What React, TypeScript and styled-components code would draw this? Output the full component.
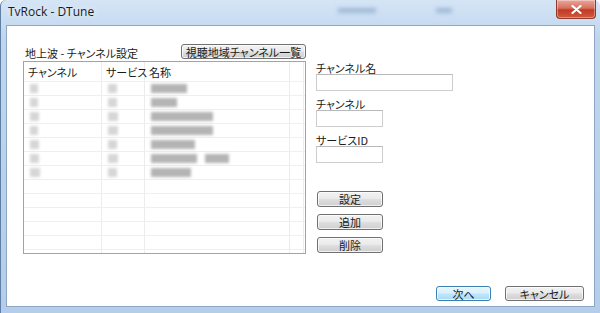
import React from "react";
import styled, { createGlobalStyle } from "styled-components";

const GlobalStyle = createGlobalStyle`
  html, body {
    margin: 0;
    padding: 0;
    background: #ffffff;
  }
  body {
    font-family: "Noto Sans CJK JP", "Noto Sans", sans-serif;
  }
`;

type Row = { ch: number; sv: number; name: number[] };

// blurred rows of the channel table (widths of the smudges)
const rows: Row[] = [
  { ch: 8, sv: 9, name: [36] },
  { ch: 8, sv: 9, name: [26] },
  { ch: 9, sv: 10, name: [62] },
  { ch: 8, sv: 10, name: [62] },
  { ch: 9, sv: 9, name: [44] },
  { ch: 9, sv: 10, name: [46, 24] },
  { ch: 10, sv: 9, name: [40] },
];

const EMPTY_ROWS = 6;

export default function App() {
  return (
    <>
      <GlobalStyle />
      <Window>
        <TitleBar>
          <Title>TvRock - DTune</Title>
          <Ghost $w={38} />
          <Ghost $w={16} />
          <CloseButton aria-label="close">
            <svg width="11" height="9" viewBox="0 0 11 9">
              <path
                d="M1.5 1 L9.5 8 M9.5 1 L1.5 8"
                stroke="#fff"
                strokeWidth="2.2"
                strokeLinecap="round"
              />
            </svg>
          </CloseButton>
        </TitleBar>

        <Client>
          <Main>
            <LeftPanel>
              <PanelHeader>
                <Label>地上波 - チャンネル設定</Label>
                <Button $w={125}>視聴地域チャンネル一覧</Button>
              </PanelHeader>
              <ListBox>
                <HeadRow>
                  <Cell $w={78}>チャンネル</Cell>
                  <Cell $w={43}>サービス</Cell>
                  <Cell $w={145}>名称</Cell>
                  <Cell $w={14} />
                </HeadRow>
                {rows.map((r, i) => (
                  <BodyRow key={i}>
                    <Cell $w={78}>
                      <Smudge style={{ width: r.ch }} />
                    </Cell>
                    <Cell $w={43}>
                      <Smudge style={{ width: r.sv }} />
                    </Cell>
                    <Cell $w={145}>
                      {r.name.map((w, j) => (
                        <Smudge key={j} $dark style={{ width: w }} />
                      ))}
                    </Cell>
                    <Cell $w={14} />
                  </BodyRow>
                ))}
                {Array.from({ length: EMPTY_ROWS }).map((_, i) => (
                  <BodyRow key={"e" + i}>
                    <Cell $w={78} />
                    <Cell $w={43} />
                    <Cell $w={145} />
                    <Cell $w={14} />
                  </BodyRow>
                ))}
              </ListBox>
            </LeftPanel>

            <RightPanel>
              <Field>
                <Label>チャンネル名</Label>
                <TextBox $w={137} />
              </Field>
              <Field>
                <Label>チャンネル</Label>
                <TextBox $w={67} />
              </Field>
              <Field>
                <Label>サービスID</Label>
                <TextBox $w={67} />
              </Field>
              <ActionStack>
                <Button $w={66} $h={16}>設定</Button>
                <Button $w={66} $h={16}>追加</Button>
                <Button $w={66} $h={16}>削除</Button>
              </ActionStack>
            </RightPanel>
          </Main>

          <Footer>
            <Button $w={55} $default>次へ</Button>
            <Button $w={79}>キャンセル</Button>
          </Footer>
        </Client>
      </Window>
    </>
  );
}

const Window = styled.div`
  width: 600px;
  height: 313px;
  box-sizing: border-box;
  display: flex;
  flex-direction: column;
  padding: 0 5px 6px 5px;
  background: linear-gradient(180deg, #d5e5f6 0%, #c0d6ee 12%, #b9d1ec 60%, #b4cdea 100%);
  border-left: 1px solid #5f7fa5;
  border-radius: 6px 6px 0 0;
`;

const TitleBar = styled.div`
  height: 25px;
  flex: none;
  display: flex;
  align-items: flex-start;
  gap: 60px;
`;

const Title = styled.div`
  margin-top: 4px;
  margin-left: 2px;
  width: 270px;
  font-family: "Open Sans", "Noto Sans", sans-serif;
  font-size: 12px;
  line-height: 16px;
  color: #1b1b1b;
  text-shadow: 0 0 6px rgba(255, 255, 255, 0.9);
`;

const Ghost = styled.span<{ $w: number }>`
  margin-top: 8px;
  width: ${(p) => p.$w}px;
  height: 5px;
  background: #9fb8d6;
  filter: blur(2px);
`;

const CloseButton = styled.button`
  margin-left: auto;
  margin-right: -1px;
  width: 40px;
  height: 19px;
  padding: 0;
  display: flex;
  align-items: center;
  justify-content: center;
  border: 1px solid #8a3a2e;
  border-top: none;
  border-radius: 0 0 4px 4px;
  background: linear-gradient(180deg, #e9a89b 0%, #d7705d 45%, #c13a25 55%, #cf5a3e 100%);
  box-shadow: inset 0 0 0 1px rgba(255, 255, 255, 0.35);
`;

const Client = styled.div`
  flex: 1;
  display: flex;
  flex-direction: column;
  padding: 18px 10px 5px 16px;
  background: #ffffff;
  border: 1px solid #8da6c3;
  font-feature-settings: "palt";
`;

const Main = styled.div`
  display: flex;
  gap: 10px;
`;

const LeftPanel = styled.div`
  width: 283px;
  display: flex;
  flex-direction: column;
  gap: 2px;
`;

const PanelHeader = styled.div`
  display: flex;
  justify-content: space-between;
  align-items: flex-end;
  padding-left: 2px;
`;

const Label = styled.div`
  font-size: 11px;
  line-height: 12px;
  height: 12px;
  color: #1a1a1a;
  white-space: nowrap;
`;

const Button = styled.button<{ $w: number; $h?: number; $default?: boolean }>`
  width: ${(p) => p.$w}px;
  height: ${(p) => p.$h ?? 15}px;
  box-sizing: border-box;
  padding: 0;
  font-family: "Noto Sans CJK JP", sans-serif;
  font-feature-settings: "palt";
  font-size: 11px;
  line-height: 12px;
  color: #1a1a1a;
  border: 1px solid ${(p) => (p.$default ? "#3c7fb1" : "#707070")};
  border-radius: 3px;
  background: ${(p) =>
    p.$default
      ? "linear-gradient(180deg, #eaf6fd 0%, #d9f0fc 45%, #bee6fd 55%, #a7d9f5 100%)"
      : "linear-gradient(180deg, #f2f2f2 0%, #ebebeb 45%, #dddddd 55%, #cfcfcf 100%)"};
  box-shadow: inset 0 0 0 1px rgba(255, 255, 255, 0.7);
`;

const ListBox = styled.div`
  height: 193px;
  box-sizing: border-box;
  border: 1px solid #a3a3a3;
  overflow: hidden;
  background: #fff;
`;

const HeadRow = styled.div`
  display: flex;
  height: 19px;
  align-items: center;
  border-bottom: 1px solid #f0f0f0;
  font-size: 11px;
  color: #1a1a1a;
`;

const BodyRow = styled.div`
  display: flex;
  height: 13px;
  border-bottom: 1px solid #efefef;
`;

const Cell = styled.div<{ $w: number }>`
  width: ${(p) => p.$w}px;
  height: 100%;
  box-sizing: border-box;
  flex: none;
  display: flex;
  align-items: center;
  gap: 6px;
  padding-left: 4px;
  border-right: 1px solid #ececec;
  white-space: nowrap;
  line-height: 12px;
`;

const Smudge = styled.span<{ $dark?: boolean }>`
  height: 9px;
  background: ${(p) => (p.$dark ? "#b4b4b4" : "#d6d6d6")};
  filter: blur(1.8px);
  margin-left: 2px;
`;

const RightPanel = styled.div`
  display: flex;
  flex-direction: column;
  gap: 7px;
  padding-top: 18px;
`;

const Field = styled.div`
  display: flex;
  flex-direction: column;
`;

const TextBox = styled.div<{ $w: number }>`
  width: ${(p) => p.$w}px;
  height: 17px;
  box-sizing: border-box;
  border: 1px solid #cdcdcd;
  border-top-color: #b9b9b9;
  background: #fff;
`;

const ActionStack = styled.div`
  display: flex;
  flex-direction: column;
  gap: 7px;
  margin-top: 21px;
  padding-left: 1px;
`;

const Footer = styled.div`
  margin-top: auto;
  display: flex;
  justify-content: flex-end;
  gap: 14px;
`;
